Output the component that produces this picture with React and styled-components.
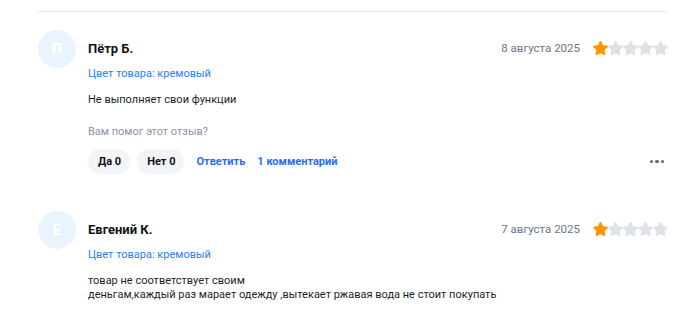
import React from "react";
import styled, { createGlobalStyle } from "styled-components";

const GlobalStyle = createGlobalStyle`
  body {
    margin: 0;
    background: #ffffff;
    font-family: Roboto, "Noto Sans", sans-serif;
    color: #1f2229;
  }
`;

const reviews = [
  {
    letter: "П",
    name: "Пётр Б.",
    date: "8 августа 2025",
    rating: 1,
    color: "кремовый",
    text: "Не выполняет свои функции",
    actions: true
  },
  {
    letter: "Е",
    name: "Евгений К.",
    date: "7 августа 2025",
    rating: 1,
    color: "кремовый",
    text:
      "товар не соответствует своим\nденьгам,каждый раз марает одежду ,вытекает ржавая вода не стоит покупать",
    actions: false
  }
];

const Star = ({ filled }) => (
  <svg width="15" height="15" viewBox="2.5 2.5 19 19">
    <path
      d="M12 3.6l2.5 5.2 5.7.8-4.1 4 1 5.7L12 16.6l-5.1 2.7 1-5.7-4.1-4 5.7-.8z"
      fill={filled ? "#ff9500" : "#dee2e8"}
      stroke={filled ? "#ff9500" : "#dee2e8"}
      strokeWidth="2.2"
      strokeLinejoin="round"
    />
  </svg>
);

const Review = ({ r }) => (
  <ReviewRow>
    <Avatar>{r.letter}</Avatar>
    <Body>
      <Header>
        <Name>{r.name}</Name>
        <Meta>
          <DateText>{r.date}</DateText>
          <Stars>
            {[1, 2, 3, 4, 5].map(i => (
              <Star key={i} filled={i <= r.rating} />
            ))}
          </Stars>
        </Meta>
      </Header>
      <ColorLine>Цвет товара: {r.color}</ColorLine>
      <Text>{r.text}</Text>
      {r.actions && (
        <>
          <Question>Вам помог этот отзыв?</Question>
          <Actions>
            <Pill>Да 0</Pill>
            <Pill>Нет 0</Pill>
            <LinkBtn>Ответить</LinkBtn>
            <LinkBtn>1 комментарий</LinkBtn>
            <More>
              <span />
              <span />
              <span />
            </More>
          </Actions>
        </>
      )}
    </Body>
  </ReviewRow>
);

const App = () => (
  <>
    <GlobalStyle />
    <Wrapper>
      <Divider />
      <List>
        {reviews.map(r => (
          <Review key={r.name} r={r} />
        ))}
      </List>
    </Wrapper>
  </>
);

export default App;

const Wrapper = styled.section`
  padding: 11px 32px 0 38px;
`;

const Divider = styled.div`
  height: 1px;
  background: #e8eaee;
`;

const List = styled.div`
  display: flex;
  flex-direction: column;
  gap: 37px;
  padding-top: 18px;
`;

const ReviewRow = styled.article`
  display: flex;
  gap: 12px;
`;

const Avatar = styled.div`
  flex: none;
  width: 38px;
  height: 38px;
  border-radius: 50%;
  background: #eaf4fe;
  color: #ffffff;
  font-size: 14px;
  font-weight: 700;
  display: flex;
  align-items: center;
  justify-content: center;
`;

const Body = styled.div`
  flex: 1;
  min-width: 0;
`;

const Header = styled.div`
  display: flex;
  align-items: center;
  justify-content: space-between;
  height: 20px;
  margin-top: 8px;
`;

const Name = styled.div`
  font-size: 13px;
  font-weight: 700;
  color: #111318;
`;

const Meta = styled.div`
  display: flex;
  align-items: center;
  gap: 13px;
`;

const DateText = styled.span`
  font-size: 11.5px;
  color: #6b7588;
`;

const Stars = styled.div`
  display: flex;
`;

const ColorLine = styled.div`
  margin-top: 7px;
  font-size: 11px;
  line-height: 18px;
  color: #2b7ef6;
`;

const Text = styled.div`
  margin-top: 10px;
  font-size: 11px;
  line-height: 14px;
  color: #1c1f25;
  white-space: pre-line;
`;

const Question = styled.div`
  margin-top: 16px;
  font-size: 11px;
  line-height: 18px;
  color: #8b94a5;
`;

const Actions = styled.div`
  margin-top: 8px;
  display: flex;
  align-items: center;
  gap: 7px;
`;

const Pill = styled.button`
  border: none;
  height: 25px;
  padding: 0 9px 0 10px;
  border-radius: 13px;
  background: #f2f4f7;
  font-family: inherit;
  font-size: 11px;
  font-weight: 700;
  color: #111318;
`;

const LinkBtn = styled.span`
  margin-left: 5px;
  font-size: 11px;
  font-weight: 700;
  color: #1f6ff5;
`;

const More = styled.div`
  margin-left: auto;
  display: flex;
  gap: 2px;
  padding-right: 4px;
  span {
    width: 3.5px;
    height: 3.5px;
    border-radius: 50%;
    background: #5f6878;
  }
`;
